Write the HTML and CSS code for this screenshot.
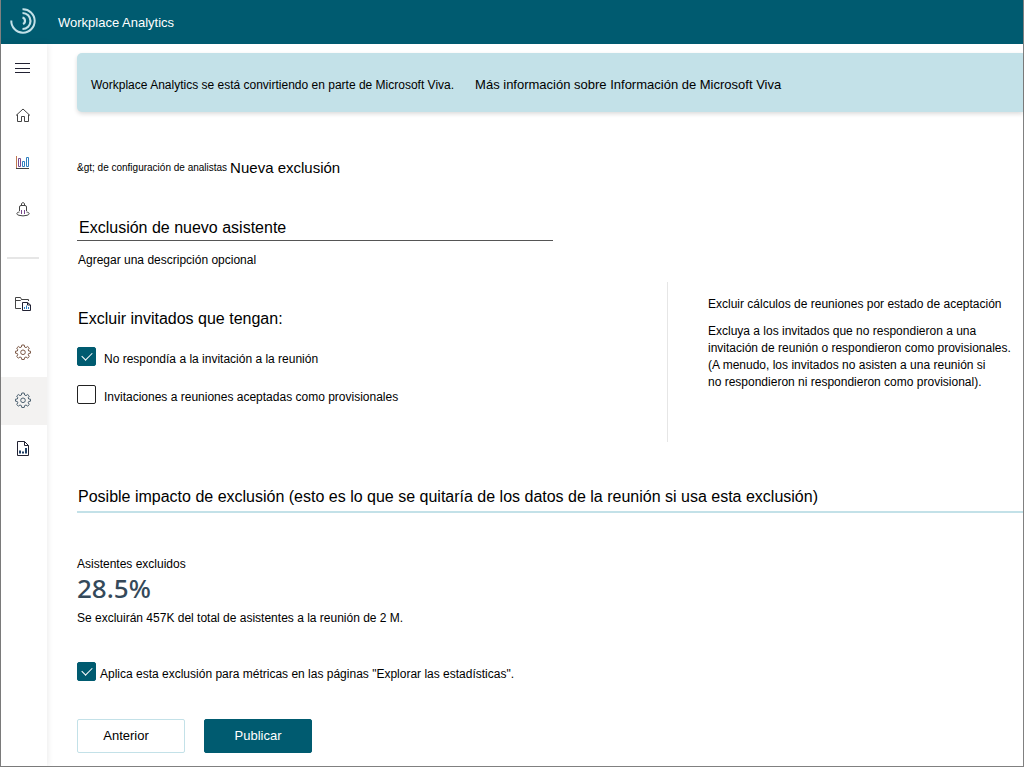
FILE: index.html
```html
<!DOCTYPE html>
<html lang="es">
<head>
<meta charset="utf-8">
<meta name="viewport" content="width=device-width, initial-scale=1">
<title>Workplace Analytics</title>
<link rel="stylesheet" href="styles.css">
</head>
<body>
<div class="app">
  <header class="topbar">
    <svg class="logo" viewBox="0 0 26 26" aria-hidden="true">
      <path d="M12.500 1.300A11.700 11.700 0 1 1 1.300 12.500" stroke-width="2"/>
      <path d="M12.500 5A8 8 0 0 1 12.500 21" stroke-width="2.200"/>
      <path d="M12.500 9.500A3.500 3.500 0 0 1 13 16" stroke-width="2.200"/>
    </svg>
    <span class="brand">Workplace Analytics</span>
  </header>
  <div class="body">
    <nav class="rail" aria-label="Principal">
      <button class="rail-item" type="button" aria-label="Menú">
        <svg class="icon dark" viewBox="0 0 16 16"><path d="M0 3.500H15M0 8.500H15M0 12.500H15"/></svg>
      </button>
      <a class="rail-item" href="#" aria-label="Inicio">
        <svg class="icon" viewBox="0 0 16 16"><path d="M1 8.500L8 2L15 8.500M2.500 7.500V14.500H6.500V9.500H9.500V14.500H13.500V7.500"/></svg>
      </a>
      <a class="rail-item" href="#" aria-label="Estadísticas">
        <svg class="icon" viewBox="0 0 16 16"><path class="blue" d="M11.500 3.500H13.500V12.500H11.500ZM7.500 7.500H9.500V12.500H7.500Z"/><path class="plum" d="M3.500 4.500H5.500V12.500H3.500Z"/><path class="rust" d="M1.500 2V14"/><path d="M1 14.500H14"/></svg>
      </a>
      <a class="rail-item" href="#" aria-label="Personas">
        <svg class="icon" viewBox="0 0 16 16"><path d="M6.500 4.500V2.500Q8 .5 9.500 2.500V4.500M4.500 10V6Q4.500 4.500 6 4.500H10Q11.500 4.500 11.500 6V10"/><path class="plum" d="M6.500 9V13M9.500 9V13"/><path d="M4.500 11C1 11.500 1 13.500 4 14.300Q8 15.500 12 14.300C15 13.500 15 11.500 11.500 11"/></svg>
      </a>
      <hr class="rail-divider">
      <a class="rail-item tall" href="#" aria-label="Consultas">
        <svg class="icon" viewBox="0 0 16 16"><path d="M6 12.500H.5V1.500H5.500L6.500 3.500H13.500V5M.5 4.500H5.500L6.500 3.500"/><path class="dark" d="M7.500 6.500H12.500L15.500 9V14.500H7.500ZM12.500 6.500V9H15.500"/><path class="blue" d="M9.500 13V11M11.500 13V9.500M13.500 13V11"/></svg>
      </a>
      <a class="rail-item tall" href="#" aria-label="Configuración">
        <svg class="icon warm" viewBox="0 0 16 16"><path d="M6.800 1H9.200L9.600 3L11 3.600L12.700 2.500L14.300 4.100L13.200 5.800L13.700 7L15.500 7.200V9.200L13.700 9.500L13.200 10.800L14.300 12.500L12.700 14.100L11 13L9.600 13.600L9.200 15.500H6.800L6.400 13.600L5 13L3.300 14.100L1.700 12.500L2.800 10.800L2.300 9.500L.5 9.200V7.200L2.300 7L2.800 5.800L1.700 4.100L3.300 2.500L5 3.600L6.400 3Z"/><circle cx="8" cy="8.300" r="2.300"/></svg>
      </a>
      <a class="rail-item tall selected" href="#" aria-label="Configuración de analistas" aria-current="page">
        <svg class="icon cool" viewBox="0 0 16 16"><path d="M6.800 1H9.200L9.600 3L11 3.600L12.700 2.500L14.300 4.100L13.200 5.800L13.700 7L15.500 7.200V9.200L13.700 9.500L13.200 10.800L14.300 12.500L12.700 14.100L11 13L9.600 13.600L9.200 15.500H6.800L6.400 13.600L5 13L3.300 14.100L1.700 12.500L2.800 10.800L2.300 9.500L.5 9.200V7.200L2.300 7L2.800 5.800L1.700 4.100L3.300 2.500L5 3.600L6.400 3Z"/><circle cx="8" cy="8.300" r="2.300"/></svg>
      </a>
      <a class="rail-item tall" href="#" aria-label="Informes">
        <svg class="icon" viewBox="0 0 16 16"><path class="dark" d="M2.500 1.500H9.500L13.500 5.500V15.500H2.500ZM9.500 1.500V5.500H13.500"/><path class="bars" d="M5 13.500V10.500M8 13.500V11.500M11 13.500V8"/></svg>
      </a>
    </nav>
    <main class="content">
      <section class="banner">
        <span>Workplace Analytics se está convirtiendo en parte de Microsoft Viva.</span>
        <a class="banner-link" href="#">Más información sobre Información de Microsoft Viva</a>
      </section>
      <div class="crumbs">
        <a class="crumb" href="#">&amp;gt; de configuración de analistas</a>
        <h1 class="crumb-current">Nueva exclusión</h1>
      </div>
      <input class="name" type="text" aria-label="Nombre de la exclusión" value="Exclusión de nuevo asistente">
      <p class="description">Agregar una descripción opcional</p>
      <div class="columns">
        <fieldset class="options">
          <legend class="heading">Excluir invitados que tengan:</legend>
          <label class="option"><input class="check" type="checkbox" checked><span class="option-text">No respondía a la invitación a la reunión</span></label>
          <label class="option"><input class="check" type="checkbox"><span class="option-text">Invitaciones a reuniones aceptadas como provisionales</span></label>
        </fieldset>
        <aside class="help">
          <p>Excluir cálculos de reuniones por estado de aceptación</p>
          <p>Excluya a los invitados que no respondieron a una<br>invitación de reunión o respondieron como provisionales.<br>(A menudo, los invitados no asisten a una reunión si<br>no respondieron ni respondieron como provisional).</p>
        </aside>
      </div>
      <h2 class="heading impact">Posible impacto de exclusión (esto es lo que se quitaría de los datos de la reunión si usa esta exclusión)</h2>
      <section class="stat">
        <p>Asistentes excluidos</p>
        <p class="figure">28.5%</p>
        <p>Se excluirán 457K del total de asistentes a la reunión de 2 M.</p>
      </section>
      <label class="option apply"><input class="check" type="checkbox" checked><span class="option-text">Aplica esta exclusión para métricas en las páginas "Explorar las estadísticas".</span></label>
      <div class="actions">
        <button class="button" type="button">Anterior</button>
        <button class="button primary" type="button">Publicar</button>
      </div>
    </main>
  </div>
</div>
</body>
</html>
```
FILE: styles.css
```css
* { box-sizing: border-box; }
body {
  margin: 0;
  background: #fff;
  color: #000;
  font: 12px/16px "Liberation Sans", Arial, sans-serif;
}
p, h1, h2 { margin: 0; font-weight: 400; }
a { color: inherit; text-decoration: none; }

.app {
  display: flex;
  flex-direction: column;
  min-height: 100vh;
  border: 1px solid #808080;
  border-top: 0;
}
.topbar {
  display: flex;
  align-items: center;
  gap: 22px;
  height: 44px;
  padding: 0 9px;
  background: #005b70;
  color: #fff;
}
.logo {
  width: 26px;
  height: 26px;
  margin-bottom: 2px;
  fill: none;
  stroke: #c3e1e8;
}
.brand { padding-top: 2px; font-size: 13px; }
.body { display: flex; flex: 1; }

.rail {
  flex: none;
  width: 46px;
  padding-top: 1px;
  box-shadow: 0 0 7px rgba(0, 0, 0, .1);
}
.rail-item {
  display: flex;
  align-items: center;
  justify-content: center;
  width: 100%;
  height: 47px;
  padding: 0 2px 1px 0;
  border: 0;
  background: none;
}
.tall { height: 48px; padding-bottom: 2px; }
.selected { background: #f3f2f1; }
.rail-divider {
  height: 2px;
  margin: 24px 8px 22px 6px;
  border: 0;
  background: #e6e6e6;
}
.icon {
  width: 16px;
  height: 16px;
  fill: none;
  stroke: #444;
  stroke-width: 1;
}
.blue { stroke: #2f7fc0; }
.plum { stroke: #7a4a8c; }
.rust { stroke: #c07850; }
.dark { stroke: #223; }
.bars { stroke: #1f3f66; stroke-width: 2; }
.warm { stroke: #7d5a48; }
.cool { stroke: #4c6070; }

.content {
  flex: 1;
  min-width: 0;
  padding: 9px 0 13px 30px;
}
.banner {
  display: flex;
  align-items: center;
  gap: 21px;
  min-height: 59px;
  padding: 4px 14px 0;
  border-radius: 5px 0 0 5px;
  background: #c3e1e8;
  box-shadow: 0 2px 4px rgba(0, 0, 0, .14);
}
.banner-link { font-size: 13px; }
.crumbs {
  display: flex;
  align-items: center;
  gap: 3px;
  margin-top: 46px;
}
.crumb { font-size: 10px; }
.crumb-current { font-size: 15px; line-height: 20px; }
.name {
  display: block;
  width: 476px;
  max-width: 100%;
  height: 25px;
  margin-top: 38px;
  padding: 0 2px;
  border: 0;
  border-bottom: 1px solid #555;
  background: none;
  color: inherit;
  font: 16px/20px "Liberation Sans", Arial, sans-serif;
}
.description { margin-top: 11px; padding-left: 1px; }
.columns {
  display: grid;
  grid-template-columns: 590fr 356fr;
  min-height: 160px;
  margin-top: 14px;
}
.options {
  min-width: 0;
  margin: 0;
  padding: 27px 0 0;
  border: 0;
}
.heading {
  padding: 0 1px;
  font-size: 16px;
  line-height: 20px;
}
.options .heading { float: left; width: 100%; margin-bottom: 18px; }
.option {
  display: flex;
  clear: both;
  gap: 8px;
  margin-bottom: 18px;
}
.option-text { padding-top: 4px; }
.check {
  appearance: none;
  display: grid;
  place-items: center;
  flex: none;
  width: 19px;
  height: 19px;
  margin: 0;
  border: 1px solid #222;
  border-radius: 2px;
  background: #fff;
}
.check:checked { border-color: #005b70; background: #005b70; }
.check:checked::before {
  content: "";
  width: 5px;
  height: 9px;
  margin-bottom: 3px;
  border: solid #fff;
  border-width: 0 1px 1px 0;
  transform: rotate(45deg);
}
.help {
  padding: 14px 0 0 40px;
  border-left: 1px solid #e6e6e6;
  line-height: 17px;
}
.help p + p { margin-top: 10px; }
.impact {
  margin-top: 45px;
  padding-bottom: 4px;
  border-bottom: 2px solid #c3e1e8;
}
.stat { margin-top: 43px; }
.figure {
  margin: 0 0 6px;
  color: #34495a;
  font: 500 26px/32px "Noto Sans", sans-serif;
}
.apply { gap: 4px; margin: 36px 0 0; }
.actions { display: flex; gap: 19px; margin-top: 37px; }
.button {
  width: 108px;
  height: 34px;
  padding: 0 10px 0 0;
  border: 1px solid #c3e1e8;
  border-radius: 2px;
  background: #fff;
  color: #000;
  font: 13px/16px "Liberation Sans", Arial, sans-serif;
}
.primary { padding: 0; border-color: #005b70; background: #005b70; color: #fff; }
```
